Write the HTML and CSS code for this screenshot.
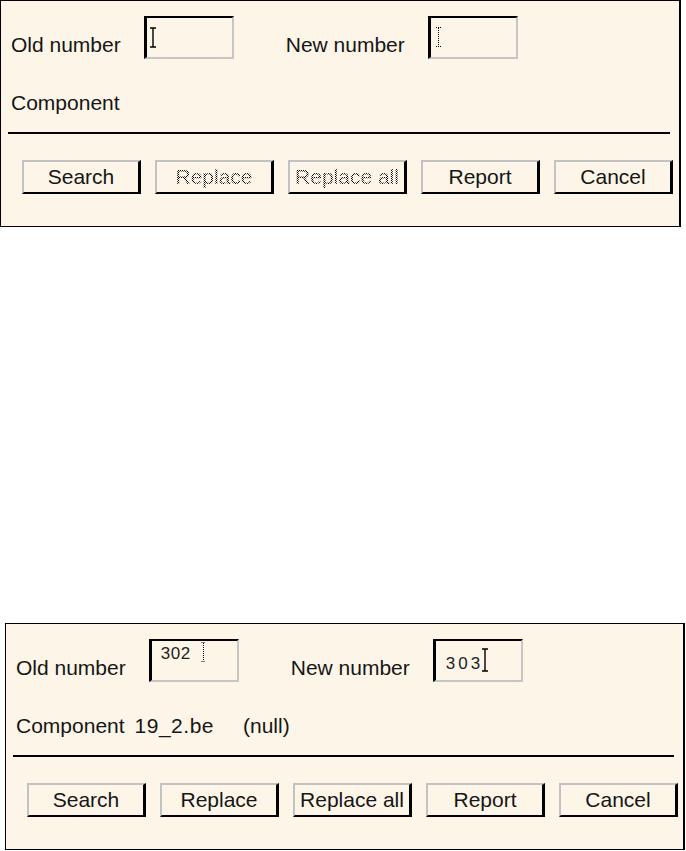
FILE: index.html
```html
<!DOCTYPE html>
<html>
<head>
<meta charset="utf-8">
<link rel="stylesheet" href="styles.css">
</head>
<body>
<div class="dialog d1">
  <div class="fields">
    <span class="label">Old number</span>
    <div class="field f1">
      <svg class="ibeam" width="8" height="21" viewBox="0 0 8 21"><path d="M1 1H7M4 1V20M1 20H7" stroke="#000" stroke-width="1.4" fill="none"/></svg>
    </div>
    <span class="label l-new">New number</span>
    <div class="field f2">
      <svg class="ibeam dotted" width="7" height="22" viewBox="0 0 7 22"><path d="M1 1.5H6M3.5 2V20M1 20.5H6" stroke="#000" stroke-width="1" stroke-dasharray="1 1" fill="none"/></svg>
    </div>
  </div>
  <div class="comp"><span class="label">Component</span></div>
  <div class="sep"></div>
  <div class="buttons">
    <button class="btn">Search</button>
    <button class="btn disabled">Replace</button>
    <button class="btn disabled">Replace all</button>
    <button class="btn">Report</button>
    <button class="btn">Cancel</button>
  </div>
</div>

<div class="dialog d2">
  <div class="fields">
    <span class="label">Old number</span>
    <div class="field f3">
      <span class="val v302">302</span>
      <svg class="ibeam dotted" width="5" height="22" viewBox="0 0 5 22"><path d="M0.5 1.5H4.5M2.5 2V20M0.5 20.5H4.5" stroke="#000" stroke-width="1" stroke-dasharray="1 1" fill="none"/></svg>
    </div>
    <span class="label l-new">New number</span>
    <div class="field f4">
      <span class="val v303">303</span>
      <svg class="ibeam" width="8" height="24" viewBox="0 0 8 24"><path d="M1 1H7M4 1V23M1 23H7" stroke="#000" stroke-width="1.4" fill="none"/></svg>
    </div>
  </div>
  <div class="comp">
    <span class="label">Component</span>
    <span class="label c-file">19_2.be</span>
    <span class="label c-null">(null)</span>
  </div>
  <div class="sep"></div>
  <div class="buttons">
    <button class="btn">Search</button>
    <button class="btn">Replace</button>
    <button class="btn">Replace all</button>
    <button class="btn">Report</button>
    <button class="btn">Cancel</button>
  </div>
</div>
</body>
</html>
```

FILE: styles.css
```css
html, body {
  margin: 0;
  padding: 0;
  background: #ffffff;
}

body {
  font-family: "Liberation Sans", Arial, sans-serif;
  color: #161616;
}

.dialog {
  box-sizing: border-box;
  background: #fdf5e7;
  border: 1px solid #000;
  border-right-width: 2px;
  height: 227px;
  padding: 15px 0 0 10px;
}

.d1 {
  width: 681px;
}

.d2 {
  width: 680px;
  margin-left: 5px;
  margin-top: 396px;
}

.fields {
  display: flex;
  align-items: flex-start;
  height: 43px;
}

.label {
  font-size: 21px;
  line-height: 24px;
  white-space: nowrap;
}

.fields .label {
  margin-top: 17px;
}

.l-new {
  margin-left: 52px;
}

.field {
  box-sizing: border-box;
  width: 90px;
  height: 43px;
  margin-left: 23px;
  border-top: 2px solid #000;
  border-left: 3px solid #000;
  border-right: 2px solid #c6c6c6;
  border-bottom: 2px solid #c6c6c6;
  display: flex;
  align-items: flex-start;
}

.ibeam {
  display: block;
  flex: none;
}

.f1 {
  padding: 9px 0 0 2px;
}

.f2 {
  padding: 8px 0 0 4px;
}

.f3 {
  padding: 0 0 0 9px;
}

.f4 {
  padding: 7px 0 0 10px;
}

.val {
  font-size: 17px;
  line-height: 17px;
  color: #222;
}

.v302 {
  margin-top: 4px;
  margin-right: 10px;
  letter-spacing: 0.5px;
}

.v303 {
  margin-top: 7px;
  letter-spacing: 3px;
  margin-right: -2px;
}

.comp {
  display: flex;
  margin-top: 32px;
}

.c-file {
  margin-left: 10px;
  letter-spacing: 0.5px;
}

.c-null {
  margin-left: 29px;
}

.sep {
  height: 2px;
  background: #000;
  margin: 17px 9px 0 -3px;
}

.buttons {
  display: flex;
  gap: 14px;
  margin-top: 26px;
  padding-left: 11px;
}

.btn {
  box-sizing: border-box;
  width: 119px;
  height: 34px;
  padding: 0;
  margin: 0;
  background: #fdf5e7;
  border-style: solid;
  border-width: 2px 3px 2px 2px;
  border-color: #c2c2c2 #000 #000 #c2c2c2;
  font-family: "Liberation Sans", Arial, sans-serif;
  font-size: 21px;
  line-height: 28px;
  color: #161616;
  text-align: center;
}

.btn.disabled {
  color: transparent;
  background-image: repeating-conic-gradient(#000 0 25%, transparent 0 50%);
  background-size: 2px 2px;
  background-color: #fdf5e7;
  -webkit-background-clip: text;
  background-clip: text;
}
```
